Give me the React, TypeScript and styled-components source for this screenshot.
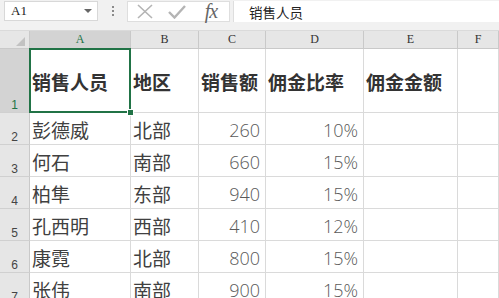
import React from "react";
import styled, { createGlobalStyle } from "styled-components";

const Global = createGlobalStyle`
  html, body { margin: 0; padding: 0; background: #ffffff; }
  body { width: 499px; height: 298px; overflow: hidden; }
`;

const Page = styled.div`
  width: 499px;
  height: 298px;
  overflow: hidden;
  display: flex;
  flex-direction: column;
  background: #fff;
`;

const TopBar = styled.div`
  height: 31px;
  flex: none;
  background: #f1f1f1;
  display: flex;
  align-items: flex-start;
  padding-top: 1px;
  box-sizing: border-box;
  border-bottom: 1px solid #dadada;
`;

const NameBox = styled.div`
  margin-left: 4px;
  width: 94px;
  height: 20px;
  background: #fff;
  border: 1px solid #d8d8d8;
  box-sizing: border-box;
  display: flex;
  align-items: center;
  justify-content: space-between;
  padding: 0 5px 0 6px;
  font-family: "Liberation Serif", serif;
  font-size: 13px;
  color: #222;
`;

const Caret = styled.span`
  width: 0;
  height: 0;
  border-left: 4px solid transparent;
  border-right: 4px solid transparent;
  border-top: 4px solid #666;
`;

const Dots = styled.div`
  width: 29px;
  height: 20px;
  display: flex;
  flex-direction: column;
  align-items: center;
  justify-content: center;
  gap: 2px;
  & > span {
    width: 2px;
    height: 2px;
    background: #8a8a8a;
  }
`;

const FxBox = styled.div`
  width: 103px;
  height: 21px;
  background: #fff;
  border: 1px solid #dedede;
  box-sizing: border-box;
  display: flex;
  align-items: center;
  padding-left: 4px;
`;

const IconSlot = styled.div<{ $w: number }>`
  width: ${(p) => p.$w}px;
  height: 19px;
  display: flex;
  align-items: center;
  justify-content: center;
`;

const Fx = styled.span`
  font-family: "Liberation Serif", serif;
  font-style: italic;
  font-size: 20px;
  color: #666;
  letter-spacing: -1px;
  line-height: 19px;
`;

const FormulaInput = styled.div`
  margin-left: 3px;
  flex: 1;
  height: 21px;
  background: #fff;
  border-left: 1px solid #dedede;
  box-sizing: border-box;
  display: flex;
  align-items: center;
  padding-left: 15px;
  font-family: "Noto Sans CJK SC", sans-serif;
  font-size: 13.5px;
  color: #222;
`;

const Sheet = styled.div`
  display: grid;
  grid-template-columns: 30px 101px 68px 67px 98px 94px 1fr;
  grid-template-rows: 18px 64px repeat(6, 32px);
`;

const ColHead = styled.div<{ $sel?: boolean }>`
  box-sizing: border-box;
  background: ${(p) => (p.$sel ? "#d3d3d3" : "#e6e6e6")};
  border-right: 1px solid #c9c9c9;
  border-bottom: 1px solid ${(p) => (p.$sel ? "#217346" : "#c9c9c9")};
  display: flex;
  align-items: center;
  justify-content: center;
  font-family: "Liberation Serif", serif;
  font-size: 12px;
  color: ${(p) => (p.$sel ? "#217346" : "#333")};
`;

const Corner = styled.div`
  box-sizing: border-box;
  background: #e6e6e6;
  border-right: 1px solid #c9c9c9;
  border-bottom: 1px solid #c9c9c9;
  display: flex;
  align-items: flex-end;
  justify-content: flex-end;
  padding: 0 4px 2px 0;
`;

const Tri = styled.span`
  width: 0;
  height: 0;
  border-left: 9px solid transparent;
  border-bottom: 9px solid #c2c2c2;
`;

const RowHead = styled.div<{ $sel?: boolean }>`
  box-sizing: border-box;
  background: ${(p) => (p.$sel ? "#d3d3d3" : "#e6e6e6")};
  border-right: 1px solid #c9c9c9;
  border-bottom: 1px solid #d0d0d0;
  display: flex;
  align-items: flex-end;
  justify-content: center;
  padding-bottom: 0;
  font-family: "Liberation Sans", sans-serif;
  font-size: 12px;
  color: ${(p) => (p.$sel ? "#217346" : "#444")};
`;

const Cell = styled.div<{ $bold?: boolean; $num?: boolean; $sel?: boolean }>`
  position: relative;
  box-sizing: border-box;
  border-right: 1px solid #dadada;
  border-bottom: 1px solid #dadada;
  display: flex;
  align-items: center;
  justify-content: ${(p) => (p.$num ? "flex-end" : "flex-start")};
  padding: ${(p) => (p.$num ? "2px 5px 0 0" : "2px 0 0 2px")};
  white-space: nowrap;
  font-family: ${(p) =>
    p.$num ? '"Open Sans", sans-serif' : '"Noto Sans CJK SC", sans-serif'};
  font-size: ${(p) => (p.$num ? "18px" : "19px")};
  font-weight: ${(p) => (p.$bold ? 700 : p.$num ? 300 : 400)};
  color: ${(p) => (p.$bold ? "#333" : p.$num ? "#595959" : "#404040")};
  ${(p) =>
    p.$sel &&
    `
    &::after {
      content: "";
      position: absolute;
      left: -1px; top: -1px; right: -1px; bottom: -1px;
      border: 2px solid #217346;
      pointer-events: none;
    }
    &::before {
      content: "";
      position: absolute;
      right: -4px; bottom: -4px;
      width: 5px; height: 5px;
      background: #217346;
      border: 1px solid #fff;
      z-index: 2;
    }
  `}
`;

const cols = ["A", "B", "C", "D", "E", "F"];

const rows: string[][] = [
  ["彭德威", "北部", "260", "10%"],
  ["何石", "南部", "660", "15%"],
  ["柏隼", "东部", "940", "15%"],
  ["孔西明", "西部", "410", "12%"],
  ["康霓", "北部", "800", "15%"],
  ["张伟", "南部", "900", "15%"],
];

export default function App() {
  return (
    <Page>
      <Global />
      <TopBar>
        <NameBox>
          <span>A1</span>
          <Caret />
        </NameBox>
        <Dots>
          <span />
          <span />
          <span />
        </Dots>
        <FxBox>
          <IconSlot $w={26}>
            <svg width="16" height="15" viewBox="0 0 16 15">
              <path d="M1 1 L15 14 M15 1 L1 14" stroke="#b4b4b4" strokeWidth="1.6" fill="none" />
            </svg>
          </IconSlot>
          <IconSlot $w={38}>
            <svg width="18" height="14" viewBox="0 0 18 14">
              <path d="M1 7 L6.5 12.5 L17 1" stroke="#b4b4b4" strokeWidth="2.4" fill="none" />
            </svg>
          </IconSlot>
          <IconSlot $w={30}>
            <Fx>fx</Fx>
          </IconSlot>
        </FxBox>
        <FormulaInput>销售人员</FormulaInput>
      </TopBar>
      <Sheet>
        <Corner>
          <Tri />
        </Corner>
        {cols.map((c) => (
          <ColHead key={c} $sel={c === "A"}>
            {c}
          </ColHead>
        ))}
        <RowHead $sel>1</RowHead>
        <Cell $bold $sel>销售人员</Cell>
        <Cell $bold>地区</Cell>
        <Cell $bold>销售额</Cell>
        <Cell $bold>佣金比率</Cell>
        <Cell $bold>佣金金额</Cell>
        <Cell />
        {rows.map((r, i) => (
          <React.Fragment key={i}>
            <RowHead>{i + 2}</RowHead>
            <Cell>{r[0]}</Cell>
            <Cell>{r[1]}</Cell>
            <Cell $num>{r[2]}</Cell>
            <Cell $num>{r[3]}</Cell>
            <Cell />
            <Cell />
          </React.Fragment>
        ))}
      </Sheet>
    </Page>
  );
}
